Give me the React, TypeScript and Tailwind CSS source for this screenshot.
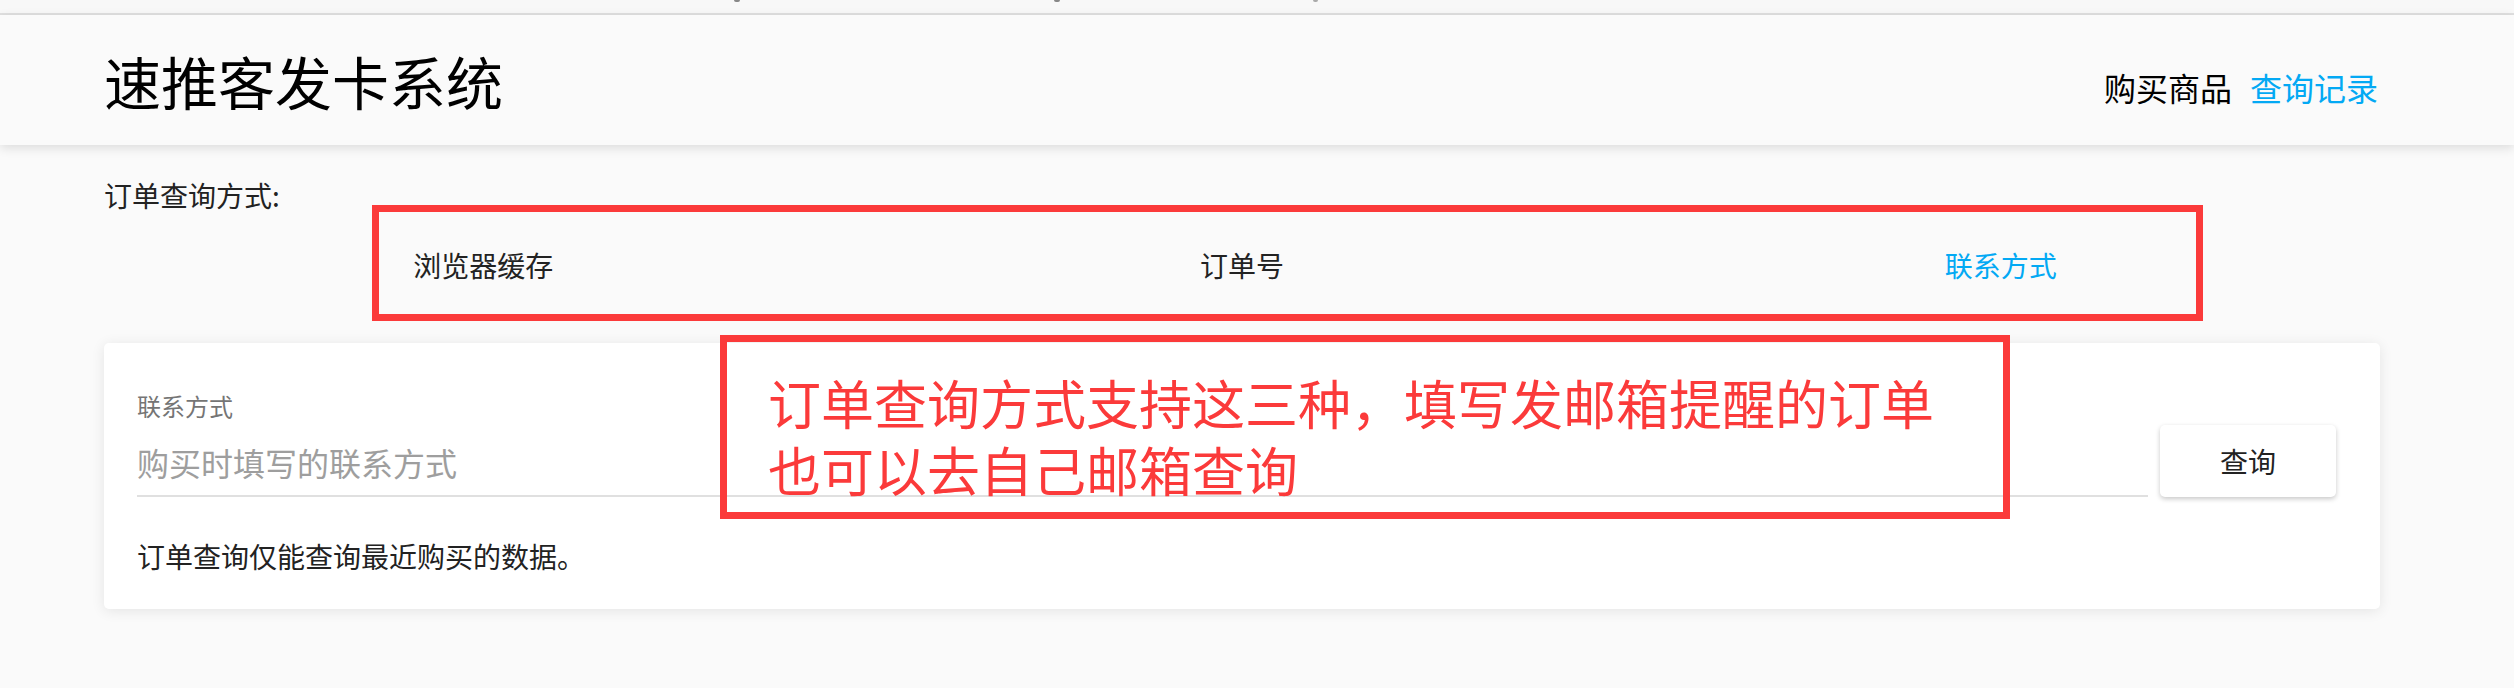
import React from 'react'

const tabs = [
  { label: '浏览器缓存', active: false },
  { label: '订单号', active: false },
  { label: '联系方式', active: true },
]

export default function App() {
  return (
    <div className="relative w-[2514px] h-[688px] overflow-hidden bg-[#fafafa] font-['Noto_Sans_CJK_SC','Noto_Sans',sans-serif] text-[#222]">
      {/* cut-off strip from the page above */}
      <div className="relative h-[13px] bg-[#f8f8f8]">
        <span className="absolute left-[734px] top-0 h-[2px] w-[6px] rounded-b bg-[#888]" />
        <span className="absolute left-[1054px] top-0 h-[2px] w-[6px] rounded-b bg-[#888]" />
        <span className="absolute left-[1313px] top-0 h-[2px] w-[5px] rounded-b bg-[#aaa]" />
      </div>
      <div className="h-[2px] bg-[#e0e0e0]" />

      {/* header */}
      <header className="relative z-10 h-[130px] bg-[#fafafa] shadow-[0_3px_10px_rgba(0,0,0,0.12)]">
        <div className="flex h-full items-center justify-between pl-[104px] pr-[136px]">
          <h1 className="text-[57px] leading-none font-normal text-black">速推客发卡系统</h1>
          <nav className="flex items-center gap-[18px] pt-[14px] text-[32px] leading-none">
            <a className="text-black">购买商品</a>
            <a className="text-[#03a9f4]">查询记录</a>
          </nav>
        </div>
      </header>

      <main className="pl-[104px] pr-[134px]">
        <p className="mt-[29px] text-[28px] leading-[42px]">订单查询方式:</p>

        <div className="flex h-[98px] items-center">
          {tabs.map((tab) => (
            <div
              key={tab.label}
              className={`flex-1 text-center text-[28px] leading-none ${tab.active ? 'text-[#03a9f4]' : 'text-[#222]'}`}
            >
              {tab.label}
            </div>
          ))}
        </div>

        <section className="mt-[29px] rounded-[5px] bg-white pt-[45px] pb-[32px] pl-[33px] pr-[44px] shadow-[0_2px_14px_rgba(0,0,0,0.09)]">
          <div className="flex items-end gap-[12px]">
            <div className="flex-1">
              <label className="block text-[24px] leading-[36px] text-[#757575]">联系方式</label>
              <div className="mt-[14px] border-b-2 border-[#e0e0e0] pb-[9px] text-[32px] leading-[48px] text-[#9e9e9e]">
                购买时填写的联系方式
              </div>
            </div>
            <button className="h-[72px] w-[176px] rounded-[5px] bg-white text-[28px] text-[#222] shadow-[0_2px_5px_rgba(0,0,0,0.22)]">
              查询
            </button>
          </div>
          <p className="mt-[38px] text-[28px] leading-[42px]">订单查询仅能查询最近购买的数据。</p>
        </section>
      </main>

      {/* annotations */}
      <div className="absolute left-[372px] top-[205px] h-[116px] w-[1831px] border-[7px] border-[#fb3a3a]" />
      <div className="absolute left-[720px] top-[335px] h-[184px] w-[1290px] border-[7px] border-[#fb3a3a] pl-[41px] pt-[27px] text-[53px] leading-[67px] text-[#fb3a3a]">
        <p>订单查询方式支持这三种，填写发邮箱提醒的订单</p>
        <p>也可以去自己邮箱查询</p>
      </div>
    </div>
  )
}
